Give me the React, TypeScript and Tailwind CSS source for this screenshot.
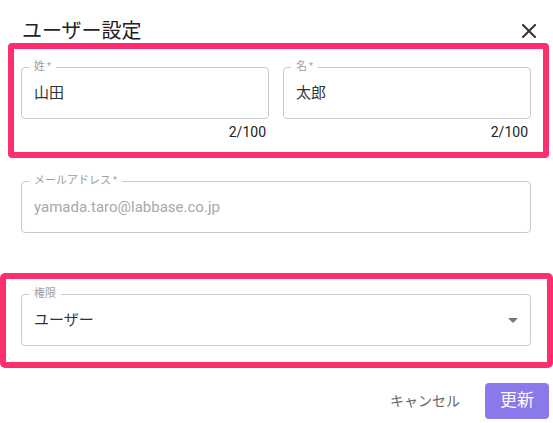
const FONT = 'Roboto, "Noto Sans CJK JP", "Noto Sans", sans-serif';

function Outlined({
  label,
  required,
  children,
  className = "",
}: {
  label: string;
  required?: boolean;
  children: React.ReactNode;
  className?: string;
}) {
  return (
    <div className={`relative h-[52px] rounded-[4px] border border-[#c9c9c9] ${className}`}>
      <span className="absolute -top-[8px] left-[7px] bg-white px-[5px] text-[11px] leading-[14px] text-[#9e9e9e]">
        {label}
        {required && <span className="ml-[2px] align-top text-[9px] leading-[12px]">*</span>}
      </span>
      {children}
    </div>
  );
}

export default function App() {
  return (
    <div className="h-[423px] w-[553px] overflow-hidden bg-white" style={{ fontFamily: FONT }}>
      <div className="flex items-center justify-between pl-[22px] pr-[17px] pt-[19px]">
        <h1 className="text-[20px] leading-[24px] text-[#222]">ユーザー設定</h1>
        <svg width="14" height="14" viewBox="0 0 14 14" className="text-[#333]">
          <path d="M1 1L13 13M13 1L1 13" stroke="currentColor" strokeWidth="2" strokeLinecap="square" />
        </svg>
      </div>

      <div className="ml-[8px] h-[115px] w-[541px] rounded-[4px] border-[6px] border-[#ff2e6e] pl-[7px] pt-[18px]">
        <div className="grid w-[510px] grid-cols-2 gap-x-[14px]">
          {[
            { label: "姓", value: "山田" },
            { label: "名", value: "太郎" },
          ].map((f) => (
            <div key={f.label}>
              <Outlined label={f.label} required>
                <div className="flex h-full items-center pl-[12px] text-[15px] text-[#333]">{f.value}</div>
              </Outlined>
              <div className="mt-[5px] pr-[3px] text-right text-[14px] leading-[16px] text-[#222]">2/100</div>
            </div>
          ))}
        </div>
      </div>

      <Outlined label="メールアドレス" required className="ml-[21px] mt-[23px] w-[510px]">
        <div className="flex h-full items-center pl-[12px] text-[15px] text-[#a8a8a8]">
          yamada.taro@labbase.co.jp
        </div>
      </Outlined>

      <div className="mt-[40px] h-[95px] w-[553px] rounded-[5px] border-[6px] border-[#ff2e6e] pl-[15px] pt-[15px]">
        <Outlined label="権限" className="w-[510px]">
          <div className="flex h-full items-center justify-between pl-[12px] pr-[12px] text-[15px] text-[#333]">
            <span>ユーザー</span>
            <svg width="10" height="5" viewBox="0 0 10 5">
              <path d="M0 0H10L5 5Z" fill="#757575" />
            </svg>
          </div>
        </Outlined>
      </div>

      <div className="mt-[15px] flex items-center justify-end pr-[4px]">
        <span className="mr-[25px] text-[14px] text-[#666]">キャンセル</span>
        <div className="flex h-[36px] w-[64px] items-center justify-center rounded-[4px] bg-[#8979ea] text-[17px] text-white">
          更新
        </div>
      </div>
    </div>
  );
}
